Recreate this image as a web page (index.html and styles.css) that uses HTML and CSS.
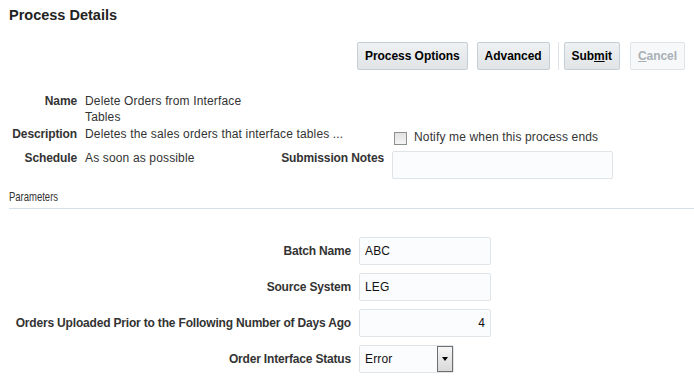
FILE: index.html
```html
<!DOCTYPE html>
<html>
<head>
<meta charset="utf-8">
<link rel="stylesheet" href="styles.css">
</head>
<body>
<div class="page">
  <h1 class="title">Process Details</h1>

  <div class="toolbar">
    <button class="btn">Process Options</button>
    <button class="btn btn-adv">Advanced</button>
    <span class="sep"></span>
    <button class="btn">Sub<u>m</u>it</button>
    <button class="btn btn-disabled"><u>C</u>ancel</button>
  </div>

  <div class="details">
    <div class="lbl">Name</div>
    <div class="val">Delete Orders from Interface Tables</div>
    <div></div>
    <div></div>

    <div class="lbl">Description</div>
    <div class="val nowrap">Deletes the sales orders that interface tables ...</div>
    <div></div>
    <div class="notify"><span class="checkbox"></span><span>Notify me when this process ends</span></div>

    <div class="lbl">Schedule</div>
    <div class="val">As soon as possible</div>
    <div class="lbl">Submission Notes</div>
    <div><div class="textarea"></div></div>
  </div>

  <div class="section-header"><span class="section-title">Parameters</span></div>

  <div class="params">
    <div class="plbl">Batch Name</div>
    <div class="input">ABC</div>

    <div class="plbl">Source System</div>
    <div class="input">LEG</div>

    <div class="plbl">Orders Uploaded Prior to the Following Number of Days Ago</div>
    <div class="input num">4</div>

    <div class="plbl">Order Interface Status</div>
    <div class="select"><span class="select-text">Error</span><span class="select-btn"><span class="tri"></span></span></div>
  </div>
</div>
</body>
</html>
```

FILE: styles.css
```css
* { box-sizing: border-box; }
html, body { margin: 0; padding: 0; background: #fff; }
body {
  font-family: "Liberation Sans", Arial, sans-serif;
  font-size: 12px;
  color: #333;
}
.page { padding-left: 9px; }

.title {
  margin: 6px 0 0 0;
  font-size: 14.5px;
  line-height: 18px;
  font-weight: bold;
  color: #222;
}

.toolbar {
  margin: 18px 9px 0 0;
  display: flex;
  justify-content: flex-end;
  align-items: stretch;
  height: 28px;
}
.btn {
  font-family: "Liberation Sans", Arial, sans-serif;
  font-size: 12px;
  font-weight: bold;
  letter-spacing: -0.05px;
  color: #000;
  height: 28px;
  padding: 0 7px;
  border: 1px solid #c4ced7;
  border-radius: 2px;
  background: linear-gradient(#eef0f2, #e1e5e8);
  margin-left: 9px;
}
.btn u { text-decoration: underline; }
.sep {
  width: 1px;
  background: #dde3e8;
  margin: 0 5px 0 8px;
}
.toolbar .sep + .btn { margin-left: 0; }
.btn-disabled {
  color: #a9b0b6;
  background: #f7f8f9;
  border-color: #dfe4e8;
  margin-left: 10px;
}

.details {
  margin-top: 23px;
  display: grid;
  grid-template-columns: 68px 168px 123px 221px;
  column-gap: 8px;
  row-gap: 1px;
  line-height: 16px;
}
.lbl {
  text-align: right;
  font-weight: bold;
  letter-spacing: -0.12px;
  color: #333;
  white-space: nowrap;
}
.val { color: #333; letter-spacing: 0.15px; }
.nowrap { white-space: nowrap; }
.notify {
  display: flex;
  align-items: center;
  padding: 3px 0 4px 2px;
  white-space: nowrap;
  letter-spacing: 0.15px;
}
.checkbox {
  width: 13px;
  height: 13px;
  border: 1px solid #8e8f8f;
  background: linear-gradient(#e2e2e2, #f4f4f4);
  margin-right: 7px;
  margin-top: 2px;
}
.textarea {
  margin-top: 1px;
  width: 221px;
  height: 28px;
  border: 1px solid #dfe4e8;
  border-radius: 2px;
  background: #fbfcfd;
}

.section-header {
  margin-top: 10px;
  border-bottom: 1px solid #d6dfe6;
  padding-bottom: 3px;
  line-height: 16px;
}
.section-title {
  display: inline-block;
  font-size: 13px;
  color: #333;
  transform: scaleX(0.73);
  transform-origin: left center;
}

.params {
  margin-top: 28px;
  display: grid;
  grid-template-columns: 342px 132px;
  column-gap: 8px;
  row-gap: 8px;
  align-items: center;
}
.plbl {
  text-align: right;
  font-weight: bold;
  letter-spacing: -0.18px;
  color: #333;
  white-space: nowrap;
}
.input {
  height: 28px;
  border: 1px solid #dfe4e8;
  border-radius: 2px;
  background: #fbfcfd;
  padding: 0 5px;
  line-height: 26px;
  color: #111;
  letter-spacing: 0.15px;
}
.input.num { text-align: right; }
.select {
  width: 95px;
  height: 28px;
  border: 1px solid #dfe4e8;
  border-radius: 2px;
  background: #fbfcfd;
  display: flex;
  align-items: stretch;
  color: #111;
}
.select-text {
  flex: 1;
  padding-left: 5px;
  line-height: 26px;
  letter-spacing: 0.15px;
}
.select-btn {
  width: 16px;
  border: 1px solid #6f6f6f;
  background: linear-gradient(#f6f6f6, #d9d9d9);
  display: flex;
  align-items: center;
  justify-content: center;
}
.tri {
  width: 0;
  height: 0;
  border-left: 3.5px solid transparent;
  border-right: 3.5px solid transparent;
  border-top: 4px solid #000;
}
```
